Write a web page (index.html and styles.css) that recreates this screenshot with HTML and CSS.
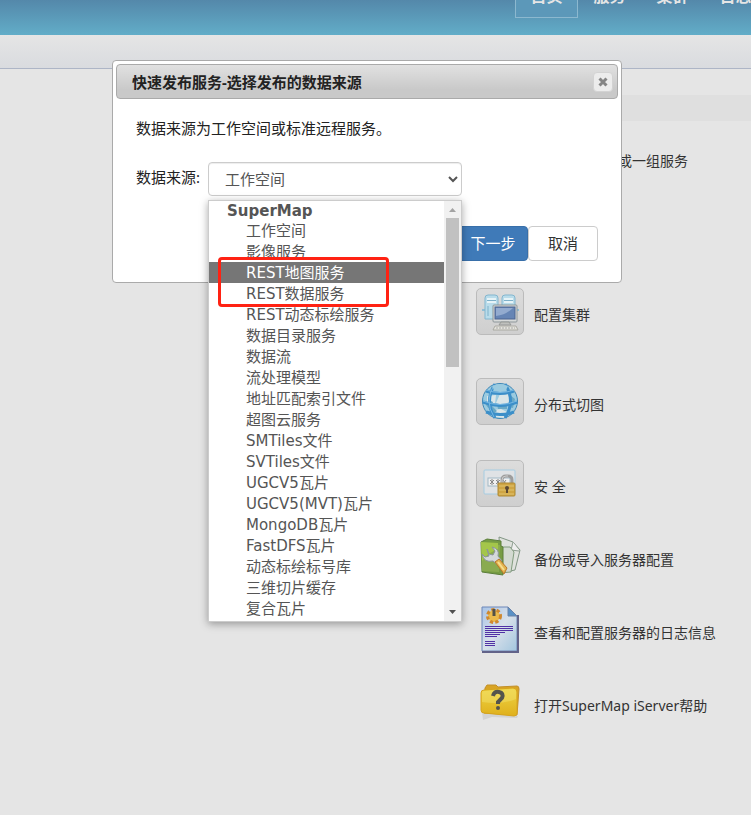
FILE: index.html
```html
<!DOCTYPE html>
<html lang="zh-CN">
<head>
  <meta charset="UTF-8">
  <title>SuperMap iServer</title>
  <link rel="stylesheet" href="styles.css">
</head>
<body>

  <!-- 顶部导航 -->
  <header class="header">
    <nav class="nav">
      <a class="active" href="#">首页</a>
      <a href="#">服务</a>
      <a href="#">集群</a>
      <a href="#">日志</a>
    </nav>
  </header>
  <div class="toolbar"></div>

  <main class="main">
    <div class="band"></div>
    <ul class="entries">
      <li class="entry entry-first"><a href="#">快速发布一个或一组服务</a></li>
      <li class="entry entry-tall entry-cluster">
        <span class="icon framed">
          <svg width="39" height="39" viewBox="0 0 39 39">
            <path d="M1 18h37" stroke="#91bed4" stroke-width="2"/>
            <path d="M4 6q0-3 3-3h7q3 0 3 3v21H4z" fill="#b9dcea" stroke="#83b6cf"/>
            <path d="M21 6q0-3 3-3h7q3 0 3 3v21H21z" fill="#b9dcea" stroke="#83b6cf"/>
            <path d="M6 7h9M6 10h9M23 7h9M23 10h9" stroke="#e6f3f7" stroke-width="2"/>
            <path d="M6 8.500h9M23 8.500h9M7 14v10" stroke="#7eb1ca"/>
            <rect x="12" y="13" width="24" height="17" rx="1" fill="#d8dad9" stroke="#8d9699"/>
            <rect x="14" y="15" width="20" height="12" fill="#6685b5" stroke="#4c6491"/>
            <path d="M15 24q10-1 17-8H15z" fill="#93abcf"/>
            <path d="M20 30h8l2 3H18z" fill="#bfc0bd" stroke="#979996"/>
            <path d="M14 34h21l2 4H12z" fill="#e4e3dc" stroke="#aaa9a2"/>
            <path d="M15 36h19" stroke="#aaa" stroke-dasharray="2 1"/>
          </svg>
        </span>
        <a href="#">配置集群</a>
      </li>
      <li class="entry entry-tall">
        <span class="icon framed">
          <svg width="39" height="39" viewBox="0 0 39 39">
            <circle cx="19" cy="19" r="17.500" fill="#9ccbe0" stroke="#3f87b5"/>
            <path d="M6 14l9-1-1 9-8 2zM19 12h8l2 7-7 5-7-3zM12 28l8-1 6 3-3 6-8-1z" fill="#dbe6e8"/>
            <path d="M8 18l4 2-1 4 5 5-4 3-7-9zM29 13l5 4-2 9-4-1zM16 22h10v5h-9z" fill="#6aa9c6"/>
            <path d="M5 9q14 5 28 0M2 20q17 7 34 0M5 30q14 5 28 0M14 2Q3 19 14 36M24 2q11 17 0 34" fill="none" stroke="#3c8fc9" stroke-width="3"/>
            <path d="M5 8q14 5 28 0M2 19q17 7 34 0M13 3Q3 19 13 35" fill="none" stroke="#78b9e3"/>
            <path d="M11 4q8-4 16 0l-2 4q-6 1-12 0z" fill="#9bcbe0"/>
          </svg>
        </span>
        <a href="#">分布式切图</a>
      </li>
      <li class="entry">
        <span class="icon framed">
          <svg width="39" height="39" viewBox="0 0 39 39">
            <rect x="3" y="6" width="31" height="24" rx="1" fill="#dfe2e5" stroke="#a5cce2"/>
            <rect x="7" y="14" width="22" height="8" fill="#f0f0f0" stroke="#a1b8c5"/>
            <path d="M9 16l4 4M13 16l-4 4M11 15v6M15 16l4 4M19 16l-4 4M17 15v6M22 16l3 4M25 16l-3 4" stroke="#888"/>
            <path d="M21 20v-4q0-4 4-4h2q4 0 4 4v4" fill="none" stroke="#9d9d9d" stroke-width="3"/>
            <path d="M21 19v-3q0-4 4-4h2" fill="none" stroke="#ccc"/>
            <rect x="17" y="19" width="17" height="13" rx="1" fill="#cfa544" stroke="#b08a35"/>
            <path d="M18 22h15M18 26h15M18 30h15" stroke="#e0c36f"/>
            <circle cx="26" cy="24" r="2" fill="#5b4934"/>
            <path d="M26 24v5" stroke="#5b4934" stroke-width="2"/>
          </svg>
        </span>
        <a href="#">安 全</a>
      </li>
      <li class="entry">
        <span class="icon">
          <svg width="42" height="42" viewBox="0 0 42 42">
            <path d="M20 2l14 5 7 8-5 20-14 3z" fill="#dfe2dd" stroke="#829684"/>
            <path d="M34 7l-2 8 8 1" fill="#efefef" stroke="#8f9d91"/>
            <path d="M19 12h12l4 5-3 20-13 1z" fill="#d3dad1" stroke="#829c7e"/>
            <path d="M2 7l6-3 14 2v5l2 1v28L3 37z" fill="#769c43" stroke="#5c7f3b"/>
            <path d="M2 8l19 2-1 27-17-1z" fill="#8aab50"/>
            <path d="M2 7l17 1v6Q10 17 3 26z" fill="#a4c64a"/>
            <path d="M8 14l2 5 4 1 2-4-3-4q8 2 6 9l4 5-4 4-5-4Q5 28 3 19l3 3 4-1z" fill="#d5d9db" stroke="#8c9699"/>
            <path d="M16 27l4-3 8 9-3 6z" fill="#e3b44f" stroke="#b97628"/>
            <path d="M19 27l6 8" stroke="#f7dd8d" stroke-width="2"/>
          </svg>
        </span>
        <a href="#">备份或导入服务器配置</a>
      </li>
      <li class="entry">
        <span class="icon">
          <svg width="38" height="47" viewBox="0 0 38 47">
            <defs>
              <linearGradient id="paper" x1="0" y1="0" x2="1" y2="1">
                <stop offset="0" stop-color="#a9c4e6"/>
                <stop offset="0.500" stop-color="#d8e0ea"/>
                <stop offset="1" stop-color="#a3c6de"/>
              </linearGradient>
            </defs>
            <path d="M1 1h26l9 9v35H1z" fill="url(#paper)" stroke="#6c87b9"/>
            <path d="M1 46h36V9" fill="none" stroke="#626389" stroke-width="2"/>
            <path d="M27 1v9h9z" fill="#5a91c6" stroke="#6982a9"/>
            <circle cx="13" cy="10" r="6" fill="#eebf54" stroke="#d0882f" stroke-width="4" stroke-dasharray="3 2"/>
            <circle cx="13" cy="10" r="5" fill="#ebbb4d"/>
            <path d="M13 3v7" stroke="#525149" stroke-width="3"/>
            <path d="M4 20.500h28M4 22.500h28M4 24.500h28M4 26.500h20M4 28.500h15M4 30.500h12M4 35.500h10M4 37.500h10M4 39.500h10" stroke="#5031a5"/>
          </svg>
        </span>
        <a href="#">查看和配置服务器的日志信息</a>
      </li>
      <li class="entry">
        <span class="icon">
          <svg width="42" height="38" viewBox="0 0 42 38">
            <defs>
              <linearGradient id="folder" x1="0" y1="0" x2="0" y2="1">
                <stop offset="0" stop-color="#efd545"/>
                <stop offset="1" stop-color="#dfb01c"/>
              </linearGradient>
            </defs>
            <path d="M3 29l36 4-1 2-25-1-9 3z" fill="#d3d3d3"/>
            <path d="M6 5l2-3h9l2 2 19-1q2 0 2 3l-2 26L5 30z" fill="#d9a424" stroke="#c2902b"/>
            <path d="M2 10q0-3 3-3l29-2q4 0 4 4v21q0 3-3 3L5 30q-3 0-3-3z" fill="url(#folder)" stroke="#d6a41e"/>
            <path d="M3 10q0-2 2-2l29-2q3 0 3 3v7Q23 22 3 19z" fill="#f1e06a" opacity="0.500"/>
            <path d="M14 13q1-5 6-4 5 1 3 6l-4 4v2" fill="none" stroke="#55544d" stroke-width="4"/>
            <circle cx="19" cy="25" r="2" fill="#55544d"/>
          </svg>
        </span>
        <a href="#">打开SuperMap iServer帮助</a>
      </li>
    </ul>
  </main>

  <!-- 快速发布服务对话框 -->
  <div class="dialog" role="dialog" aria-labelledby="dialogTitle">
    <div class="dialog-title">
      <span id="dialogTitle">快速发布服务-选择发布的数据来源</span>
      <button class="close" type="button" aria-label="关闭">
        <svg width="10" height="10" viewBox="0 0 10 10"><path d="M1.500 1.500l7 7M8.500 1.500l-7 7" stroke="#858585" stroke-width="3"/></svg>
      </button>
    </div>
    <div class="dialog-content">
      <p>数据来源为工作空间或标准远程服务。</p>
      <div class="field">
        <label for="source">数据来源:</label>
        <div class="source">
          <select id="source">
            <option>工作空间</option>
          </select>

          <!-- 展开的下拉列表 -->
          <div class="popup">
            <div class="options" role="listbox" aria-label="数据来源">
              <div class="group">SuperMap</div>
              <div class="option" role="option">工作空间</div>
              <div class="option" role="option">影像服务</div>
              <div class="option selected" role="option" aria-selected="true">REST地图服务</div>
              <div class="option" role="option">REST数据服务</div>
              <div class="option" role="option">REST动态标绘服务</div>
              <div class="option" role="option">数据目录服务</div>
              <div class="option" role="option">数据流</div>
              <div class="option" role="option">流处理模型</div>
              <div class="option" role="option">地址匹配索引文件</div>
              <div class="option" role="option">超图云服务</div>
              <div class="option" role="option">SMTiles文件</div>
              <div class="option" role="option">SVTiles文件</div>
              <div class="option" role="option">UGCV5瓦片</div>
              <div class="option" role="option">UGCV5(MVT)瓦片</div>
              <div class="option" role="option">MongoDB瓦片</div>
              <div class="option" role="option">FastDFS瓦片</div>
              <div class="option" role="option">动态标绘标号库</div>
              <div class="option" role="option">三维切片缓存</div>
              <div class="option" role="option">复合瓦片</div>
            </div>
            <div class="scrollbar">
              <svg class="arrow" width="7" height="4" viewBox="0 0 7 4"><path d="M0 4h7L3.500 0z" fill="#a3a3a3"/></svg>
              <div class="track"><div class="thumb"></div></div>
              <svg class="arrow" width="7" height="4" viewBox="0 0 7 4"><path d="M0 0h7L3.500 4z" fill="#505050"/></svg>
            </div>
            <div class="mark"></div>
          </div>
        </div>
      </div>
      <div class="buttons">
        <button class="btn btn-primary" type="button">下一步</button>
        <button class="btn" type="button">取消</button>
      </div>
    </div>
  </div>

</body>
</html>
```

FILE: styles.css
```css
* {
  box-sizing: border-box;
}

body {
  margin: 0;
  min-height: 100vh;
  overflow-x: hidden;
  background-color: #e5e5e5;
  font-family: "Noto Sans", "Noto Sans CJK SC", sans-serif;
  font-size: 14px;
  color: #333;
}

a {
  color: inherit;
  text-decoration: none;
}

/* header */
.header {
  display: flex;
  align-items: flex-end;
  height: 35px;
  padding: 0 0 17px 515px;
  overflow: hidden;
  background: linear-gradient(#5488aa, #62adc8);
}

.nav {
  display: flex;
}

.nav a {
  flex: none;
  width: 63px;
  height: 44px;
  border: 1px solid transparent;
  font-size: 16px;
  font-weight: bold;
  line-height: 42px;
  text-align: center;
  color: #e5e5e5;
}

.nav .active {
  border-color: #8cb8cf;
  background-color: #5c98b9;
}

.toolbar {
  height: 34px;
  border-bottom: 1px solid #adb5c6;
  background: linear-gradient(#e5e5e5, #d9dbdf);
}

/* entries on the home page */
.main {
  padding-top: 26px;
  margin-left: 300px;
}

.band {
  height: 26px;
  background-color: #dfdfdf;
}

.entries {
  margin: 0;
  padding: 0 0 0 176px;
  list-style: none;
}

.entry {
  display: flex;
  align-items: center;
  height: 73px;
  white-space: nowrap;
}

.entry-first {
  height: 78px;
  padding-left: 58px;
}

.entry-tall {
  height: 90px;
}

.entry-cluster {
  margin-top: 70px;
}

.icon {
  display: flex;
  justify-content: center;
  align-items: center;
  width: 48px;
  height: 47px;
  margin: 0 10px 5px 0;
}

.framed {
  border: 1px solid #bbb;
  border-radius: 5px;
  background: linear-gradient(#dcdcdc, #cfcfcf);
}

/* dialog */
.dialog {
  position: absolute;
  top: 60px;
  left: 112px;
  width: 510px;
  padding: 3px;
  border: 1px solid #aaa;
  border-radius: 4px;
  background-color: #fff;
  font-size: 15px;
  color: #222;
}

.dialog-title {
  display: flex;
  justify-content: space-between;
  align-items: center;
  height: 35px;
  padding: 0 4px 0 15px;
  border: 1px solid #aaa;
  border-radius: 4px;
  background: linear-gradient(#e1e1e1, #c9c9c9 75%);
  font-weight: bold;
  line-height: 18px;
}

.close {
  display: flex;
  justify-content: center;
  align-items: center;
  width: 20px;
  height: 20px;
  padding: 0;
  border: 1px solid #d3d3d3;
  border-radius: 4px;
  background-color: #ececec;
}

.dialog-content {
  padding: 20px 20px 18px;
}

.dialog-content p {
  margin: 0 0 25px;
  line-height: 18px;
}

.field {
  display: flex;
}

.field label {
  width: 72px;
  line-height: 30px;
}

.source {
  position: relative;
  width: 254px;
}

.source select {
  display: block;
  width: 100%;
  height: 34px;
  padding: 0 0 0 12px;
  border: 1px solid #ccc;
  border-radius: 4px;
  background-color: #fff;
  box-shadow: inset 0 1px 1px rgba(0, 0, 0, 0.075);
  font-family: inherit;
  font-size: 15px;
  color: #555;
}

.popup {
  position: absolute;
  top: 38px;
  left: 0;
  z-index: 2;
  display: flex;
  width: 100%;
  border: 1px solid #ccc;
  background-color: #fff;
  box-shadow: 0 2px 8px rgba(0, 0, 0, 0.35);
  font-family: "DejaVu Sans", "Noto Sans CJK SC", sans-serif;
  color: #555;
}

.options {
  flex: 1;
  padding-bottom: 2px;
}

.group {
  height: 19px;
  padding-left: 18px;
  font-weight: bold;
  line-height: 21px;
}

.option {
  height: 21px;
  padding-left: 37px;
  line-height: 23px;
}

.selected {
  background-color: #767676;
  color: #fff;
}

.scrollbar {
  display: flex;
  flex-direction: column;
  align-items: center;
  gap: 6px;
  width: 17px;
  padding: 7px 0;
  background-color: #f1f1f1;
}

.track {
  flex: 1;
  width: 13px;
}

.thumb {
  height: 149px;
  background-color: #c1c1c1;
}

.mark {
  position: absolute;
  top: 56px;
  left: 9px;
  width: 171px;
  height: 50px;
  border: 3px solid #ff2213;
  border-radius: 4px;
}

.buttons {
  display: flex;
  justify-content: flex-end;
  margin-top: 30px;
}

.btn {
  width: 70px;
  height: 35px;
  padding: 0 0 2px;
  border: 1px solid #ccc;
  border-radius: 4px;
  background-color: #fff;
  font-family: inherit;
  font-size: 15px;
  color: #333;
}

.btn-primary {
  border-color: #386fa9;
  background-color: #3f7ab8;
  color: #fff;
}
```
